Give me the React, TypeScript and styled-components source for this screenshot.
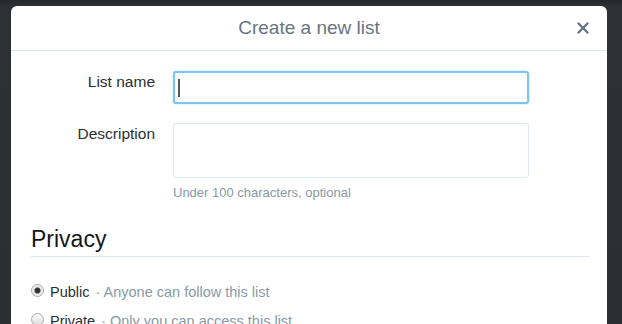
import React from "react";
import styled, { createGlobalStyle } from "styled-components";

const GlobalStyle = createGlobalStyle`
  html, body {
    margin: 0;
    padding: 0;
    background: #2a2e32;
    overflow: hidden;
  }
  * {
    box-sizing: border-box;
  }
`;

const App = () => {
  return (
    <Page>
      <GlobalStyle />
      <Modal>
        <Header>
          <Title>Create a new list</Title>
          <CloseButton aria-label="Close">
            <svg width="12" height="12" viewBox="0 0 12 12">
              <path d="M1.5 1.5 L10.5 10.5 M10.5 1.5 L1.5 10.5" stroke="#66757f" strokeWidth="2.4" strokeLinecap="round" />
            </svg>
          </CloseButton>
        </Header>
        <Body>
          <FieldRow>
            <Label>List name</Label>
            <Field>
              <InputWrap>
                <TextInput defaultValue="" />
                <Caret />
              </InputWrap>
            </Field>
          </FieldRow>
          <FieldRow>
            <Label>Description</Label>
            <Field>
              <TextArea />
              <Help>Under 100 characters, optional</Help>
            </Field>
          </FieldRow>
          <Section>
            <SectionTitle>Privacy</SectionTitle>
            <RadioList>
              <RadioRow>
                <Radio checked />
                <RadioName>Public</RadioName>
                <RadioHint>· Anyone can follow this list</RadioHint>
              </RadioRow>
              <RadioRow>
                <Radio />
                <RadioName>Private</RadioName>
                <RadioHint>· Only you can access this list</RadioHint>
              </RadioRow>
            </RadioList>
          </Section>
        </Body>
      </Modal>
    </Page>
  );
};

const Page = styled.div`
  width: 622px;
  height: 324px;
  overflow: hidden;
  padding: 6px 15px 0 11px;
  background: linear-gradient(#24282c 0, #2d3135 6px, #2b2f33 100%);
  font-family: "Liberation Sans", Arial, sans-serif;
`;

const Modal = styled.div`
  width: 596px;
  height: 340px;
  background: #fff;
  border-radius: 6px 6px 0 0;
`;

const Header = styled.div`
  position: relative;
  height: 45px;
  display: flex;
  align-items: center;
  justify-content: center;
  border-bottom: 1px solid #e1e8ed;
`;

const Title = styled.h3`
  margin: 0;
  font-size: 19px;
  font-weight: normal;
  color: #66757f;
`;

const CloseButton = styled.button`
  position: absolute;
  right: 18px;
  top: 16px;
  padding: 0;
  border: 0;
  background: none;
  display: flex;
`;

const Body = styled.div`
  padding: 20px 18px 0 20px;
`;

const FieldRow = styled.div`
  display: flex;
  gap: 18px;
  margin-bottom: 19px;
`;

const Label = styled.label`
  width: 124px;
  text-align: right;
  font-size: 15.5px;
  color: #292f33;
  padding-top: 2px;
`;

const Field = styled.div`
  display: flex;
  flex-direction: column;
`;

const InputWrap = styled.div`
  position: relative;
`;

const TextInput = styled.input`
  width: 356px;
  height: 33px;
  border: 2px solid #7cc5ee;
  border-radius: 3px;
  box-shadow: 0 0 2px rgba(86, 180, 239, 0.5);
  padding: 0 6px;
  font-size: 15px;
  font-family: inherit;
  outline: none;
`;

const Caret = styled.span`
  position: absolute;
  left: 5px;
  top: 8px;
  width: 2px;
  height: 18px;
  background: #555;
`;

const TextArea = styled.textarea`
  width: 356px;
  height: 55px;
  border: 1px solid #e1e8ed;
  border-radius: 3px;
  resize: none;
  outline: none;
  box-shadow: inset 0 1px 2px rgba(0, 0, 0, 0.04);
`;

const Help = styled.div`
  margin-top: 7px;
  font-size: 13px;
  color: #8899a6;
`;

const Section = styled.div`
  padding-top: 5px;
`;

const SectionTitle = styled.h2`
  margin: 0;
  font-size: 23px;
  line-height: 30px;
  font-weight: normal;
  color: #14171a;
  padding-bottom: 2px;
  border-bottom: 1px solid #e1e8ed;
`;

const RadioList = styled.div`
  display: flex;
  flex-direction: column;
  gap: 10px;
  padding-top: 25px;
`;

const RadioRow = styled.label`
  display: flex;
  align-items: center;
  gap: 6px;
  font-size: 14.5px;
  height: 19px;
`;

const Radio = styled.span<{ checked?: boolean }>`
  width: 13px;
  height: 13px;
  border-radius: 50%;
  border: 1px solid #a9a9a9;
  background: ${(p) =>
    p.checked
      ? "radial-gradient(circle, #333 0, #333 2.5px, #e6e6e6 3.5px, #fff 100%)"
      : "linear-gradient(#fff, #dcdcdc)"};
  margin-top: -2px;
`;

const RadioName = styled.span`
  color: #292f33;
`;

const RadioHint = styled.span`
  color: #8899a6;
`;

export default App;
